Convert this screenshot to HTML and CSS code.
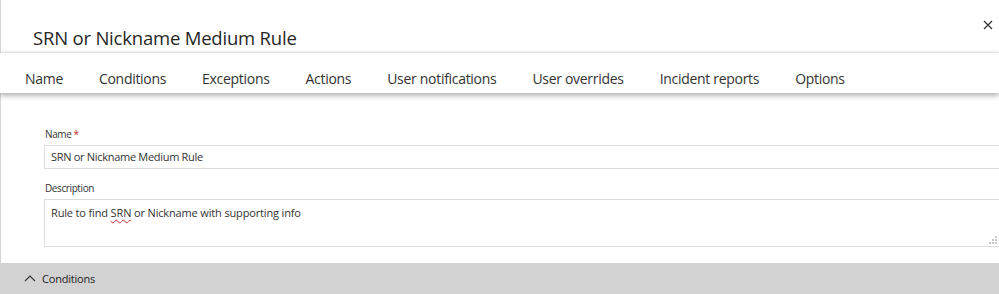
FILE: index.html
```html
<!DOCTYPE html>
<html lang="en">

<head>
    <meta charset="UTF-8">
    <meta name="viewport" content="width=device-width, initial-scale=1.0">
    <title>SRN or Nickname Medium Rule</title>
    <link rel="stylesheet" href="styles.css">
</head>

<body>
    <div class="panel">
        <div class="header">
            <h1 class="title">SRN or Nickname Medium Rule</h1>
            <button class="close" aria-label="Close">
                <svg width="10" height="10" viewBox="0 0 10 10">
                    <path d="M1 1L9 9M9 1L1 9" stroke="#333" stroke-width="1.2" fill="none" />
                </svg>
            </button>
        </div>
        <div class="tabs">
            <span class="tab">Name</span>
            <span class="tab">Conditions</span>
            <span class="tab">Exceptions</span>
            <span class="tab">Actions</span>
            <span class="tab">User notifications</span>
            <span class="tab">User overrides</span>
            <span class="tab">Incident reports</span>
            <span class="tab">Options</span>
        </div>
        <div class="form">
            <label class="label">Name <span class="required">*</span></label>
            <div class="input">SRN or Nickname Medium Rule</div>
            <label class="label">Description</label>
            <div class="textarea">
                Rule to find <span class="misspelled">SRN</span> or Nickname with supporting info
                <svg class="grip" width="8" height="8" viewBox="0 0 8 8">
                    <rect x="6" y="0" width="2" height="2" fill="#c8c8c8" />
                    <rect x="3" y="3" width="2" height="2" fill="#c8c8c8" />
                    <rect x="6" y="3" width="2" height="2" fill="#c8c8c8" />
                    <rect x="0" y="6" width="2" height="2" fill="#c8c8c8" />
                    <rect x="3" y="6" width="2" height="2" fill="#c8c8c8" />
                    <rect x="6" y="6" width="2" height="2" fill="#c8c8c8" />
                </svg>
            </div>
        </div>
        <div class="section">
            <svg class="chevron" width="12" height="8" viewBox="0 0 12 8">
                <path d="M1 7L6 2L11 7" stroke="#333" stroke-width="1.1" fill="none" />
            </svg>
            <span>Conditions</span>
        </div>
    </div>
</body>

</html>
```

FILE: styles.css
```css
body {
    margin: 0;
    font-family: 'Open Sans', 'Noto Sans', sans-serif;
    color: #333;
    background-color: #fff;
    overflow: hidden;
}

.panel {
    width: 999px;
    height: 294px;
    overflow: hidden;
}

.header {
    display: flex;
    justify-content: space-between;
    height: 53px;
    border-left: 1px solid #d4d4d4;
    box-sizing: border-box;
}

.title {
    margin: 0;
    padding: 25px 0 0 32px;
    font-size: 18.5px;
    letter-spacing: -0.2px;
    font-weight: normal;
    line-height: 26px;
    color: #262626;
}

.close {
    background: none;
    border: none;
    padding: 0;
    margin: 20px 6px 0 0;
    width: 10px;
    height: 10px;
    line-height: 0;
    cursor: pointer;
}

.tabs {
    position: relative;
    z-index: 1;
    display: flex;
    align-items: center;
    height: 40px;
    padding: 10px 0 0 7px;
    box-sizing: border-box;
    background-color: #fff;
    box-shadow: 0 3px 5px rgba(0, 0, 0, 0.28), 0 -1px 3px rgba(0, 0, 0, 0.12);
}

.tab {
    padding: 0 18px;
    font-size: 14px;
    letter-spacing: -0.3px;
    color: #333;
    white-space: nowrap;
}

.form {
    display: flex;
    flex-direction: column;
    height: 170px;
    padding: 34px 0 0 43px;
    border-left: 1px solid #d4d4d4;
    box-sizing: border-box;
}

.label {
    font-size: 10px;
    letter-spacing: -0.4px;
    line-height: 14px;
    color: #333;
    padding-left: 1px;
}

.required {
    color: #c4262e;
}

.input {
    height: 24px;
    margin: 4px -4px 12px 0;
    padding: 0 6px;
    border: 1px solid #dcdcdc;
    font-size: 11px;
    letter-spacing: -0.3px;
    line-height: 22px;
    color: #333;
    box-sizing: border-box;
}

.textarea {
    position: relative;
    height: 48px;
    margin: 4px -4px 0 0;
    padding: 5px 6px;
    border: 1px solid #dcdcdc;
    font-size: 11px;
    letter-spacing: -0.15px;
    line-height: 16px;
    color: #333;
    box-sizing: border-box;
}

.misspelled {
    text-decoration: underline wavy #d03030;
    text-decoration-thickness: 1px;
    text-underline-offset: 2px;
}

.grip {
    position: absolute;
    right: 5px;
    bottom: 2px;
}

.section {
    display: flex;
    align-items: center;
    gap: 6px;
    height: 31px;
    padding-left: 24px;
    background-color: #d2d2d2;
    font-size: 11px;
    letter-spacing: -0.2px;
    color: #222;
}

.chevron {
    margin-top: -2px;
}
```
